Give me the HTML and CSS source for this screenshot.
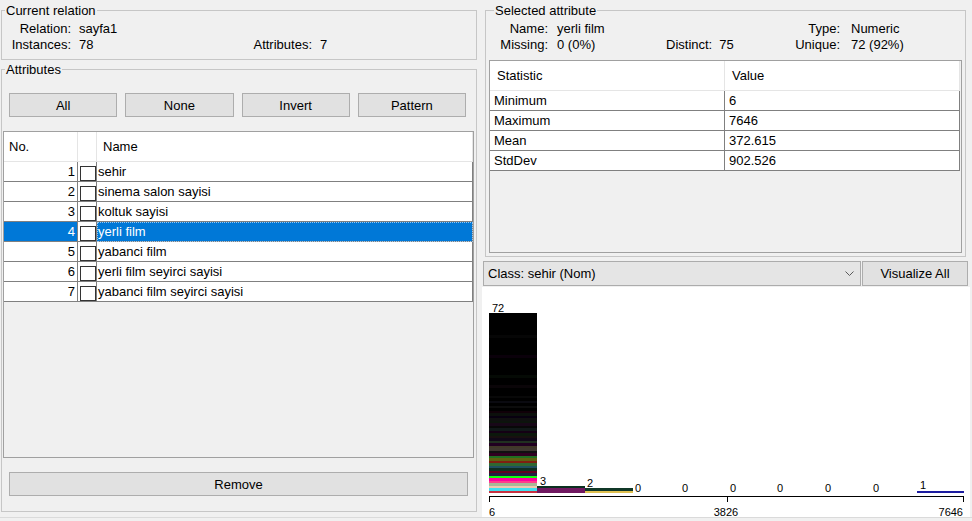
FILE: index.html
```html
<!DOCTYPE html>
<html>
<head>
<meta charset="utf-8">
<link rel="stylesheet" href="styles.css">
</head>
<body>
<div class="app">
  <div class="col-left">
    <fieldset class="box rel">
      <legend>Current relation</legend>
      <div class="info info-left">
        <span class="lbl">Relation:</span><span class="val">sayfa1</span><span></span><span></span>
        <span class="lbl">Instances:</span><span class="val">78</span><span class="lbl">Attributes:</span><span class="val">7</span>
      </div>
    </fieldset>
    <fieldset class="box attrs">
      <legend>Attributes</legend>
      <div class="btnrow">
        <button class="btn">All</button>
        <button class="btn">None</button>
        <button class="btn">Invert</button>
        <button class="btn">Pattern</button>
      </div>
      <div class="scroll attr-scroll">
        <div class="trow thead">
          <div class="no-h">No.</div><div class="cb-h"></div><div class="name-h">Name</div>
        </div>
        <div class="trow"><div class="no">1</div><div class="cb"><span class="check"></span></div><div class="name">sehir</div></div>
        <div class="trow"><div class="no">2</div><div class="cb"><span class="check"></span></div><div class="name">sinema salon sayisi</div></div>
        <div class="trow"><div class="no">3</div><div class="cb"><span class="check"></span></div><div class="name">koltuk sayisi</div></div>
        <div class="trow sel"><div class="no">4</div><div class="cb"><span class="check"></span></div><div class="name">yerli film</div></div>
        <div class="trow"><div class="no">5</div><div class="cb"><span class="check"></span></div><div class="name">yabanci film</div></div>
        <div class="trow"><div class="no">6</div><div class="cb"><span class="check"></span></div><div class="name">yerli film seyirci sayisi</div></div>
        <div class="trow"><div class="no">7</div><div class="cb"><span class="check"></span></div><div class="name">yabanci film seyirci sayisi</div></div>
      </div>
      <button class="btn remove">Remove</button>
    </fieldset>
  </div>
  <div class="col-right">
    <fieldset class="box selattr">
      <legend>Selected attribute</legend>
      <div class="info info-right">
        <span class="lbl">Name:</span><span class="val">yerli film</span><span></span><span class="lbl">Type:</span><span class="val2">Numeric</span>
        <span class="lbl">Missing:</span><span class="val">0 (0%)</span><span class="dist">Distinct:<span class="dv">75</span></span><span class="lbl">Unique:</span><span class="val2">72 (92%)</span>
      </div>
      <div class="scroll stat-scroll">
        <div class="srow shead"><div>Statistic</div><div>Value</div></div>
        <div class="srow"><div>Minimum</div><div>6</div></div>
        <div class="srow"><div>Maximum</div><div>7646</div></div>
        <div class="srow"><div>Mean</div><div>372.615</div></div>
        <div class="srow"><div>StdDev</div><div>902.526</div></div>
      </div>
    </fieldset>
    <div class="classrow">
      <div class="combo"><span>Class: sehir (Nom)</span>
        <svg class="chev" width="9" height="6" viewBox="0 0 9 6"><polyline points="0.5,0.5 4.5,4.5 8.5,0.5" fill="none" stroke="#5a5a5a" stroke-width="1"/></svg>
      </div>
      <button class="btn vis">Visualize All</button>
    </div>
    <div class="hist">
      <svg width="488" height="230" viewBox="0 0 488 230" shape-rendering="crispEdges">
        <rect x="7" y="26" width="48" height="180" fill="#000"/>
        <rect x="7" y="48" width="48" height="2.5" fill="#060606"/>
        <rect x="7" y="68" width="48" height="2.5" fill="#0a000a"/>
        <rect x="7" y="88" width="48" height="2.5" fill="#050a05"/>
        <rect x="7" y="98" width="48" height="2.5" fill="#0a0508"/>
        <rect x="7" y="108.5" width="48" height="2.5" fill="#080808"/>
        <rect x="7" y="113.5" width="48" height="2.5" fill="#0a0a10"/>
        <rect x="7" y="118.5" width="48" height="2.5" fill="#0c0c0c"/>
        <rect x="7" y="123.5" width="48" height="2.5" fill="#100008"/>
        <rect x="7" y="126" width="48" height="2.5" fill="#0c100c"/>
        <rect x="7" y="128.5" width="48" height="2.5" fill="#080010"/>
        <rect x="7" y="131" width="48" height="2.5" fill="#101010"/>
        <rect x="7" y="133.5" width="48" height="2.5" fill="#0c140c"/>
        <rect x="7" y="136" width="48" height="2.5" fill="#180818"/>
        <rect x="7" y="138.5" width="48" height="2.5" fill="#080808"/>
        <rect x="7" y="141" width="48" height="2.5" fill="#101818"/>
        <rect x="7" y="143.5" width="48" height="2.5" fill="#140014"/>
        <rect x="7" y="146" width="48" height="2.5" fill="#0c180c"/>
        <rect x="7" y="148.5" width="48" height="2.5" fill="#181010"/>
        <rect x="7" y="151" width="48" height="2.5" fill="#100818"/>
        <rect x="7" y="153.5" width="48" height="2.5" fill="#203020"/>
        <rect x="7" y="156" width="48" height="2.5" fill="#200020"/>
        <rect x="7" y="158.5" width="48" height="2.5" fill="#403828"/>
        <rect x="7" y="161" width="48" height="2.5" fill="#403830"/>
        <rect x="7" y="163.5" width="48" height="2.5" fill="#101010"/>
        <rect x="7" y="166" width="48" height="2.5" fill="#300020"/>
        <rect x="7" y="168.5" width="48" height="2.5" fill="#207020"/>
        <rect x="7" y="171" width="48" height="2.5" fill="#606010"/>
        <rect x="7" y="173.5" width="48" height="2.5" fill="#802010"/>
        <rect x="7" y="176" width="48" height="2.5" fill="#306830"/>
        <rect x="7" y="178.5" width="48" height="2.5" fill="#205060"/>
        <rect x="7" y="181" width="48" height="2.5" fill="#103020"/>
        <rect x="7" y="183.5" width="48" height="2.5" fill="#600020"/>
        <rect x="7" y="186" width="48" height="2.5" fill="#202040"/>
        <rect x="7" y="188.5" width="48" height="2.5" fill="#10ff10"/>
        <rect x="7" y="191" width="48" height="2.5" fill="#ff00a0"/>
        <rect x="7" y="193.5" width="48" height="2.5" fill="#ff3c8c"/>
        <rect x="7" y="196" width="48" height="2.5" fill="#a8b898"/>
        <rect x="7" y="198.5" width="48" height="2.5" fill="#f0c8b0"/>
        <rect x="7" y="201" width="48" height="2.5" fill="#40e0f0"/>
        <rect x="7" y="203.5" width="48" height="2.5" fill="#c83040"/>
        <rect x="55" y="198.5" width="48" height="2.5" fill="#0a3020"/>
        <rect x="55" y="201" width="48" height="5" fill="#701860"/>
        <rect x="103" y="201" width="48" height="2.5" fill="#103828"/>
        <rect x="103" y="203.5" width="48" height="2.5" fill="#e0c050"/>
        <rect x="435" y="203.5" width="47" height="2.5" fill="#1c1ca0"/>
        <g class="lab">
          <text x="10" y="25">72</text>
          <text x="58" y="198">3</text>
          <text x="105" y="200">2</text>
          <text x="153" y="205">0</text>
          <text x="200" y="205">0</text>
          <text x="248" y="205">0</text>
          <text x="295" y="205">0</text>
          <text x="343" y="205">0</text>
          <text x="391" y="205">0</text>
          <text x="438" y="202">1</text>
        </g>
        <rect x="7" y="209" width="475" height="1" fill="#000"/>
        <rect x="7" y="209" width="1" height="6" fill="#000"/>
        <rect x="245" y="209" width="1" height="6" fill="#000"/>
        <rect x="481" y="209" width="1" height="6" fill="#000"/>
        <g class="lab">
          <text x="7" y="229">6</text>
          <text x="244" y="229" text-anchor="middle">3826</text>
          <text x="481" y="229" text-anchor="end">7646</text>
        </g>
      </svg>
    </div>
  </div>
</div>
<div class="foot"></div>
</body>
</html>
```
FILE: styles.css
```css
html, body {
  margin: 0;
  padding: 0;
}
body {
  background: #f0f0f0;
  font-family: "Liberation Sans", Arial, sans-serif;
  font-size: 13px;
  color: #000;
  width: 972px;
  height: 521px;
  overflow: hidden;
}
.app {
  display: grid;
  grid-template-columns: 480px 492px;
  height: 517px;
}
.box {
  margin: 0;
  padding: 0;
  border: 1px solid #c6c6c6;
  min-width: 0;
  box-sizing: border-box;
}
.box legend {
  padding: 0 1px;
  margin-left: 3px;
  line-height: 15px;
  font-size: 13px;
}
.rel {
  margin: 3px 0 0 1px;
  width: 476px;
  padding: 3px 0 6px;
}
.attrs {
  margin: 2px 0 0 1px;
  width: 476px;
  padding: 16px 0 15px;
}
.info {
  display: grid;
  grid-auto-rows: 16px;
  line-height: 16px;
  white-space: nowrap;
}
.info .lbl {
  text-align: right;
}
.info-left {
  grid-template-columns: 69px 182px 59px auto;
}
.info-left .val {
  padding-left: 8px;
}
.info-right {
  grid-template-columns: 62px 118px 128px 46px auto;
}
.info-right .val {
  padding-left: 9px;
}
.info-right .val2 {
  padding-left: 11px;
}
.dist .dv {
  margin-left: 7px;
}
.btnrow {
  display: grid;
  grid-template-columns: repeat(4, 1fr);
  column-gap: 8px;
  margin-left: 7px;
  width: 457px;
}
.btn {
  background: #e1e1e1;
  border: 1px solid #adadad;
  font-family: inherit;
  font-size: 13px;
  color: #000;
  height: 24px;
  padding: 0;
  margin: 0;
  box-sizing: border-box;
}
.remove {
  display: block;
  margin: 14px 0 0 7px;
  width: 459px;
}
.scroll {
  border: 1px solid #a0a0a0;
  background: #f0f0f0;
  box-sizing: border-box;
  overflow: hidden;
}
.attr-scroll {
  width: 471px;
  height: 327px;
  margin: 14px 0 0 1px;
}
.trow {
  display: grid;
  grid-template-columns: 74px 19px 376px;
  height: 20px;
}
.trow > div {
  box-sizing: border-box;
  border-right: 1px solid #808080;
  border-bottom: 1px solid #808080;
  background: #fff;
  line-height: 19px;
  overflow: hidden;
  white-space: nowrap;
}
.trow.thead {
  height: 30px;
}
.trow.thead > div {
  border-right-color: #e5e5e5;
  border-bottom-color: #e5e5e5;
  line-height: 29px;
}
.no-h {
  padding-left: 5px;
}
.name-h {
  padding-left: 6px;
}
.trow .no {
  text-align: right;
  padding-right: 2px;
}
.trow .name {
  padding-left: 1px;
}
.trow .cb {
  padding: 4px 0 0 2px;
}
.check {
  display: block;
  width: 16px;
  height: 15px;
  box-sizing: border-box;
  border: 1px solid #333;
  background: #fff;
}
.trow.sel .no,
.trow.sel .name {
  background: #0078d7;
  color: #fff;
}
.trow.sel .name {
  outline: 1px dotted #9cc8ee;
  outline-offset: -1px;
}
.col-right {
  display: flex;
  flex-direction: column;
}
.selattr {
  margin: 3px 0 0 5px;
  width: 481px;
  padding: 3px 0 3px;
}
.selattr legend {
  margin-left: 8px;
}
.stat-scroll {
  width: 473px;
  height: 193px;
  margin: 7px 0 0 3px;
}
.srow {
  display: grid;
  grid-template-columns: 235px 235px;
  height: 20px;
}
.srow > div {
  box-sizing: border-box;
  border-right: 1px solid #808080;
  border-bottom: 1px solid #808080;
  background: #fff;
  line-height: 19px;
  padding-left: 4px;
  white-space: nowrap;
}
.srow.shead {
  height: 30px;
}
.srow.shead > div {
  border-right-color: #e5e5e5;
  border-bottom-color: #e5e5e5;
  line-height: 29px;
  padding-left: 7px;
}
.classrow {
  display: flex;
  margin: 4px 0 0 3px;
  height: 25px;
}
.combo {
  width: 378px;
  height: 25px;
  box-sizing: border-box;
  background: #e5e5e5;
  border: 1px solid #acacac;
  display: flex;
  align-items: center;
  padding-left: 4px;
  white-space: nowrap;
}
.chev {
  margin-left: auto;
  margin-right: 6px;
}
.vis {
  width: 106px;
  height: 25px;
  margin-left: 1px;
}
.hist {
  margin: 1px 0 0 2px;
  width: 488px;
  height: 230px;
  background: #fff;
}
.hist svg {
  display: block;
}
.lab text {
  font-family: "Liberation Sans", Arial, sans-serif;
  font-size: 11px;
  fill: #000;
}
.foot {
  height: 4px;
  border-top: 1px solid #dadada;
}
```
